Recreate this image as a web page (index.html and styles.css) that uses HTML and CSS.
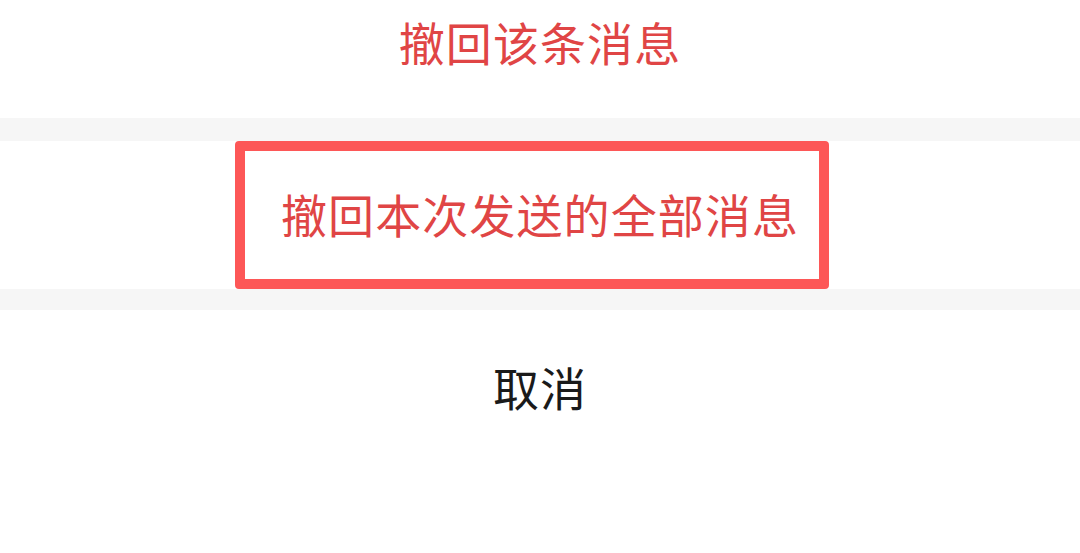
FILE: index.html
```html
<!DOCTYPE html>
<html lang="zh">
<head>
<meta charset="utf-8">
<link rel="stylesheet" href="styles.css">
</head>
<body>
<div class="sheet">
  <div class="item item-top"><span class="label danger">撤回该条消息</span></div>
  <div class="gap gap-a"></div>
  <div class="item item-mid">
    <span class="label danger">撤回本次发送的全部消息</span>
    <div class="highlight"></div>
  </div>
  <div class="gap gap-b"></div>
  <div class="item item-cancel"><span class="label">取消</span></div>
</div>
</body>
</html>
```
FILE: styles.css
```css
html, body {
  margin: 0;
  padding: 0;
  background: #ffffff;
}
.sheet {
  width: 1080px;
  height: 553px;
  display: flex;
  flex-direction: column;
  overflow: hidden;
  font-family: "Noto Sans CJK SC", "Noto Sans", sans-serif;
}
.item {
  display: flex;
  justify-content: center;
  background: #ffffff;
}
.label {
  font-size: 46px;
  line-height: 46px;
  color: #1a1a1a;
  letter-spacing: 1.1px;
}
.danger {
  color: #e04545;
}
.item-top {
  height: 118px;
  align-items: flex-start;
  padding-top: 18px;
  box-sizing: border-box;
}
.gap {
  background: #f6f6f6;
}
.gap-a { height: 23px; }
.gap-b { height: 21px; }
.item-mid {
  height: 148px;
  align-items: center;
  padding-bottom: 4px;
  box-sizing: border-box;
  position: relative;
}
.highlight {
  position: absolute;
  left: 235px;
  top: 0;
  width: 594px;
  height: 148px;
  box-sizing: border-box;
  border: 10px solid #fd5757;
  border-radius: 4px;
}
.item-cancel {
  flex: 1;
  align-items: flex-start;
  padding-top: 53px;
}
```
